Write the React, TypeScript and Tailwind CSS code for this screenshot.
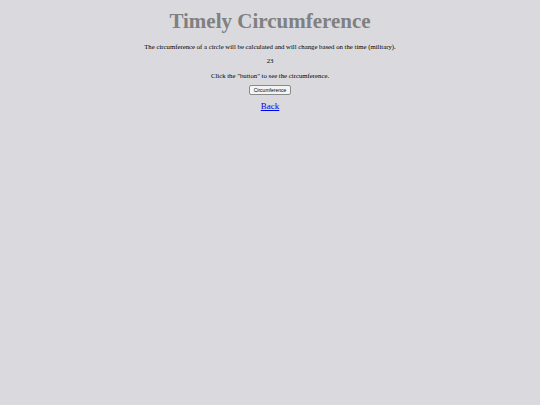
export default function App() {
  return (
    <div className="min-h-[405px] bg-[#d9d9de] text-black font-['Liberation_Serif',serif] flex flex-col items-center pt-[9px]">
      <h1 className="text-[21px] font-bold text-[#808080] leading-[25px]">Timely Circumference</h1>
      <p className="text-[6.75px] leading-[9px] mt-[8px]">
        The circumference of a circle will be calculated and will change based on the time (military).
      </p>
      <p className="text-[6.75px] leading-[9px] mt-[5px]">23</p>
      <p className="text-[6.75px] leading-[9px] mt-[6px]">Click the "button" to see the circumference.</p>
      <button className="mt-[5px] h-[10px] px-[4px] bg-[#f4f4f4] border border-[#8a8a8a] rounded-[2px] text-[5px] leading-[8px] font-['Liberation_Sans',sans-serif]">
        Circumference
      </button>
      <a href="#" className="mt-[6px] text-[9px] leading-[11px] text-[#0000ee] underline">Back</a>
    </div>
  )
}
